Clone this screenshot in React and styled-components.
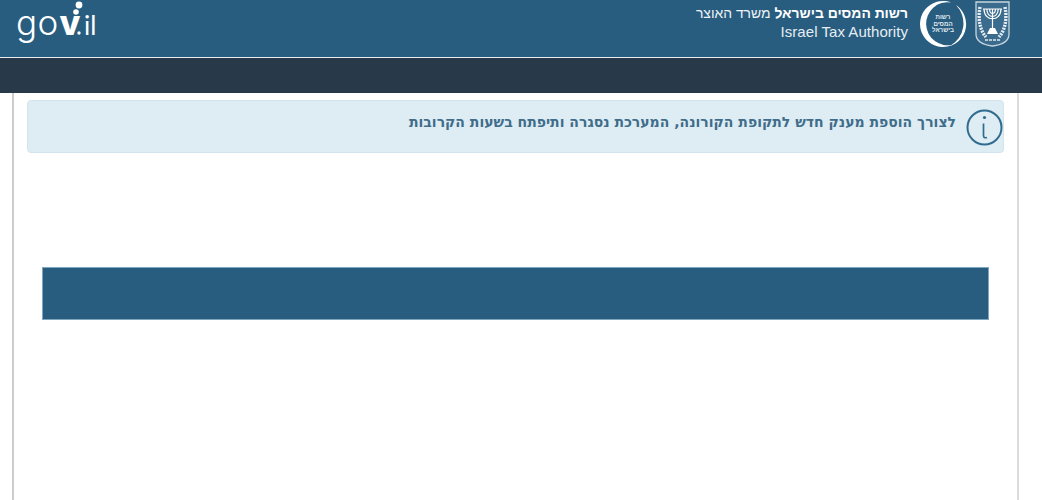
import React from 'react';
import styled, { createGlobalStyle } from 'styled-components';

const GlobalStyle = createGlobalStyle`
  html, body {
    margin: 0;
    padding: 0;
    background: #fff;
    font-family: "Liberation Sans", Arial, sans-serif;
  }
`;

const Page = styled.div`
  width: 1042px;
  height: 500px;
  overflow: hidden;
  background: #fff;
`;

const Header = styled.header`
  height: 57px;
  border-bottom: 1px solid #e8eef2;
  background: #285d80;
  display: flex;
  align-items: flex-start;
  justify-content: space-between;
  padding: 0 32px 0 16px;
`;

const Brand = styled.div`
  display: flex;
  align-items: flex-start;
`;

const TitleBlock = styled.div`
  color: #fff;
  text-align: right;
  margin: 4px 11px 0 0;
`;

const TitleHe = styled.div`
  direction: rtl;
  font-size: 13.9px;
  line-height: 18px;
  color: #eef3f6;

  b {
    font-weight: 700;
    color: #fff;
  }
`;

const TitleEn = styled.div`
  font-size: 15px;
  line-height: 19px;
  color: #e6edf2;
  letter-spacing: 0.05px;
`;

const Emblem = styled.svg`
  display: block;
  margin-top: 1px;
`;

const RingLogo = styled.svg`
  display: block;
  margin: 0 8px 0 0;
`;

const LogoSvg = styled.svg`
  display: block;
`;

const NavBar = styled.div`
  height: 35px;
  background: #283a4a;
`;

const Frame = styled.main`
  margin: 0 23px 0 12px;
  height: 407px;
  box-sizing: border-box;
  border-left: 2px solid #cccccc;
  border-right: 2px solid #dcdcdc;
  padding: 7px 13px 0 13px;
`;

const Alert = styled.div`
  height: 53px;
  box-sizing: border-box;
  background: #deecf4;
  border: 1px solid #d2e5ee;
  border-radius: 4px;
  direction: rtl;
  display: flex;
  align-items: flex-start;
  padding: 8px 0 0 0;
`;

const AlertIcon = styled.svg`
  flex: none;
  margin-top: 0;
`;

const AlertText = styled.div`
  margin: 3px 10px 0 0;
  font-family: "DejaVu Sans", sans-serif;
  font-size: 14px;
  line-height: 20px;
  font-weight: 700;
  color: #3f6d8a;
  white-space: nowrap;
`;

const Banner = styled.div`
  height: 53px;
  margin: 114px 15px 0 15px;
  box-sizing: border-box;
  background: #285d80;
  border: 1px solid #7ea6bf;
`;

const GovLogo = () => (
  <LogoSvg width="84" height="50" viewBox="0 0 84 50">
    <text x="0" y="35" fontFamily="Inter, sans-serif" fontWeight="300" fontSize="35" letterSpacing="0.5" fill="#fff">go</text>
    <text x="43.5" y="35" fontFamily="Inter, sans-serif" fontWeight="800" fontSize="34" fill="#fff">v</text>
    <circle cx="63" cy="33" r="1.7" fill="#fff" />
    <text x="68" y="35" fontFamily="Lato, sans-serif" fontWeight="400" fontSize="26" fill="#fff">il</text>
    <circle cx="60" cy="12" r="2.8" fill="#fff" />
    <circle cx="63" cy="5" r="3.4" fill="#fff" />
  </LogoSvg>
);

const TaxLogo = () => (
  <RingLogo width="48" height="48" viewBox="0 0 48 48">
    <path d="M32 2.4 A23 23 0 1 0 34 44.7 A21.6 21.6 0 1 1 32 2.4 Z" fill="#fff" />
    <path d="M37 5 A23 23 0 0 1 31 46 A26 26 0 0 0 37 5 Z" fill="#fff" />
    <g fontFamily="Liberation Sans, sans-serif" fontSize="6.2" fontWeight="700" fill="#e2eaef" textAnchor="middle">
      <text x="24" y="19">רשות</text>
      <text x="24" y="25.5">המסים</text>
      <text x="24" y="32">בישראל</text>
    </g>
  </RingLogo>
);

const StateEmblem = () => (
  <Emblem width="35" height="46" viewBox="0 0 35 46">
    <path d="M1 1 H34 V33 Q34 43 17.5 45 Q1 43 1 33 Z" fill="#5f8aa5" fillOpacity="0.35" stroke="#c6d6e0" strokeWidth="1.3" />
    <path d="M5 6 C3 16 4 28 11 36 M30 6 C32 16 31 28 24 36" fill="none" stroke="#e6edf2" strokeWidth="3.4" strokeDasharray="2 1" />
    <path d="M17.5 8 V28 M9 8 C9 21 26 21 26 8 M11.8 8 C11.8 18 23.2 18 23.2 8 M14.6 8 C14.6 14 20.4 14 20.4 8" fill="none" stroke="#fff" strokeWidth="1.2" />
    <path d="M8 8 H27" stroke="#fff" strokeWidth="1" />
    <path d="M12 33 L15 27 H20 L23 33 Z" fill="#fff" />
    <path d="M10 39 H25" stroke="#dfe8ee" strokeWidth="1.6" strokeDasharray="3 1" />
  </Emblem>
);

const InfoIcon = () => (
  <AlertIcon width="37" height="37" viewBox="0 0 37 37">
    <circle cx="18.5" cy="18.5" r="17" fill="none" stroke="#2f6c8e" strokeWidth="2" />
    <circle cx="18.5" cy="8.5" r="1.6" fill="#2f6c8e" />
    <path d="M17.5 14.5 V26.5 Q17.5 29.5 21 28.5" fill="none" stroke="#2f6c8e" strokeWidth="1.7" />
  </AlertIcon>
);

const App = () => (
  <Page>
    <GlobalStyle />
    <Header>
      <GovLogo />
      <Brand>
        <TitleBlock>
          <TitleHe><b>רשות המסים בישראל</b> משרד האוצר</TitleHe>
          <TitleEn>Israel Tax Authority</TitleEn>
        </TitleBlock>
        <TaxLogo />
        <StateEmblem />
      </Brand>
    </Header>
    <NavBar />
    <Frame>
      <Alert>
        <InfoIcon />
        <AlertText>לצורך הוספת מענק חדש לתקופת הקורונה, המערכת נסגרה ותיפתח בשעות הקרובות</AlertText>
      </Alert>
      <Banner />
    </Frame>
  </Page>
);

export default App;
